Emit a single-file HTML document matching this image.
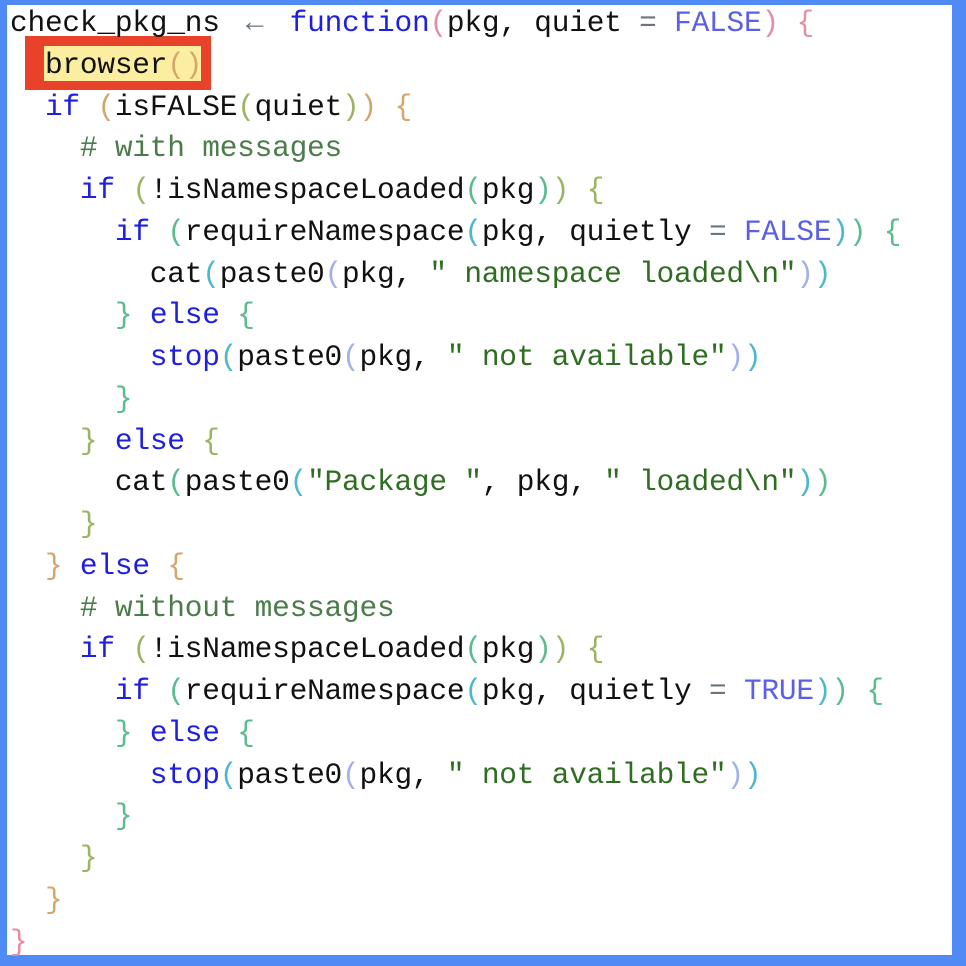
<!DOCTYPE html>
<html><head><meta charset="utf-8"><style>
html,body{margin:0;padding:0;}
body{width:966px;height:966px;background:#4f8af5;position:relative;overflow:hidden;}
.w{position:absolute;left:7px;top:5px;width:945px;height:950px;background:#fff;}
pre{position:absolute;left:10px;top:3px;margin:0;font-family:"Liberation Mono",monospace;font-size:29.5px;letter-spacing:-0.23px;line-height:41.75px;color:#111;}
.k{color:#1f1fe0}.o{color:#6b7580}.c{color:#4c7b4c}.s{color:#2f6e22}.n{color:#5b5fe6}
.ar{display:inline-block;width:35px;text-align:center;color:#6b7580;}
.b1{color:#e38ea4}.b2{color:#d4a66c}.b3{color:#9bb462}.b4{color:#5cbb8e}.b5{color:#4cb8cc}.b6{color:#9fb0ea}
.red{position:absolute;left:25px;top:36px;width:186px;height:54px;background:#e8432a;}
.yel{position:absolute;left:44px;top:46px;width:157px;height:35px;background:#fbeea0;}
</style></head><body>
<div class="w"></div>
<div class="red"></div><div class="yel"></div>
<pre>check_pkg_ns <span class="ar">←</span> <span class="k">function</span><span class="b1">(</span>pkg, quiet <span class="o">=</span> <span class="n">FALSE</span><span class="b1">)</span> <span class="b1">{</span>
  browser<span class="b2">()</span>
  <span class="k">if</span> <span class="b2">(</span>isFALSE<span class="b3">(</span>quiet<span class="b3">)</span><span class="b2">)</span> <span class="b2">{</span>
    <span class="c"># with messages</span>
    <span class="k">if</span> <span class="b3">(</span>!isNamespaceLoaded<span class="b4">(</span>pkg<span class="b4">)</span><span class="b3">)</span> <span class="b3">{</span>
      <span class="k">if</span> <span class="b4">(</span>requireNamespace<span class="b5">(</span>pkg, quietly <span class="o">=</span> <span class="n">FALSE</span><span class="b5">)</span><span class="b4">)</span> <span class="b4">{</span>
        cat<span class="b5">(</span>paste0<span class="b6">(</span>pkg, <span class="s">" namespace loaded\n"</span><span class="b6">)</span><span class="b5">)</span>
      <span class="b4">}</span> <span class="k">else</span> <span class="b4">{</span>
        <span class="k">stop</span><span class="b5">(</span>paste0<span class="b6">(</span>pkg, <span class="s">" not available"</span><span class="b6">)</span><span class="b5">)</span>
      <span class="b4">}</span>
    <span class="b3">}</span> <span class="k">else</span> <span class="b3">{</span>
      cat<span class="b4">(</span>paste0<span class="b5">(</span><span class="s">"Package "</span>, pkg, <span class="s">" loaded\n"</span><span class="b5">)</span><span class="b4">)</span>
    <span class="b3">}</span>
  <span class="b2">}</span> <span class="k">else</span> <span class="b2">{</span>
    <span class="c"># without messages</span>
    <span class="k">if</span> <span class="b3">(</span>!isNamespaceLoaded<span class="b4">(</span>pkg<span class="b4">)</span><span class="b3">)</span> <span class="b3">{</span>
      <span class="k">if</span> <span class="b4">(</span>requireNamespace<span class="b5">(</span>pkg, quietly <span class="o">=</span> <span class="n">TRUE</span><span class="b5">)</span><span class="b4">)</span> <span class="b4">{</span>
      <span class="b4">}</span> <span class="k">else</span> <span class="b4">{</span>
        <span class="k">stop</span><span class="b5">(</span>paste0<span class="b6">(</span>pkg, <span class="s">" not available"</span><span class="b6">)</span><span class="b5">)</span>
      <span class="b4">}</span>
    <span class="b3">}</span>
  <span class="b2">}</span>
<span class="b1">}</span></pre>
</body></html>
